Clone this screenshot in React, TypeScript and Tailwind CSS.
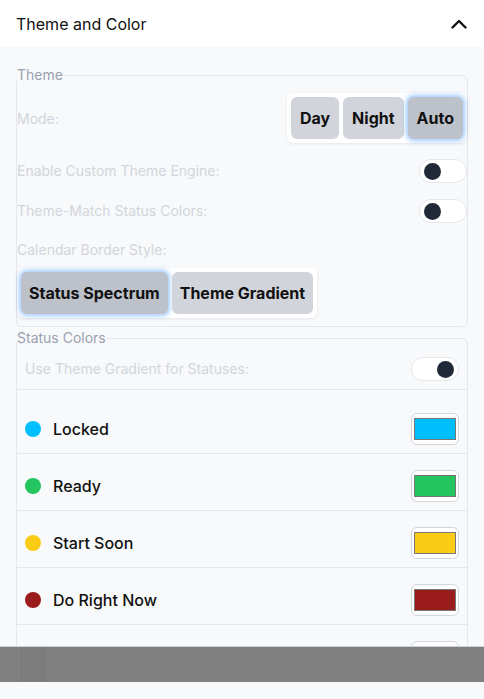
import type { ReactNode } from 'react'

type Status = { name: string; color: string }

const STATUSES: Status[] = [
  { name: 'Locked', color: '#00bfff' },
  { name: 'Ready', color: '#22c55e' },
  { name: 'Start Soon', color: '#facc15' },
  { name: 'Do Right Now', color: '#991b1b' },
  { name: 'Overdue', color: '#ffffff' },
]

const ACTIVE = 'bg-[#bcc1ca] shadow-[0_0_5px_2px_rgba(125,185,250,0.75)]'
const IDLE = 'bg-[#d1d5db]'

function Toggle({ on }: { on?: boolean }) {
  return (
    <div className={`w-12 h-6 rounded-full border border-gray-200 bg-white flex items-center px-[4px] ${on ? 'justify-end' : 'justify-start'}`}>
      <div className="w-[17px] h-[17px] rounded-full bg-[#1f2937]" />
    </div>
  )
}

function Segmented({ items, active, pad }: { items: string[]; active: string; pad: string }) {
  return (
    <div className="flex gap-1 p-1 bg-white rounded-md shadow-[0_1px_3px_rgba(0,0,0,0.08)]">
      {items.map((it) => (
        <button
          key={it}
          type="button"
          className={`h-[42px] ${pad} rounded-md text-base font-bold text-[#111] ${it === active ? ACTIVE : IDLE}`}
        >
          {it}
        </button>
      ))}
    </div>
  )
}

function Row({ label, children }: { label: string; children: ReactNode }) {
  return (
    <div className="flex items-center justify-between h-10">
      <span className="text-sm text-gray-300">{label}</span>
      {children}
    </div>
  )
}

export default function App() {
  return (
    <div className="relative w-[484px] h-[699px] overflow-hidden bg-[#f8f9fb] font-['Inter',sans-serif]">
      <div className="h-[47px] bg-white px-4 flex items-center justify-between">
        <span className="text-base text-[#111]">Theme and Color</span>
        <svg width="16" height="10" viewBox="0 0 16 10" className="mr-[1px] mt-[1px]">
          <polyline points="1.5,8.5 8,2 14.5,8.5" fill="none" stroke="#111" strokeWidth="2.4" strokeLinecap="round" strokeLinejoin="round" />
        </svg>
      </div>

      <div className="px-4 pt-[18px]">
        <fieldset className="border border-gray-200 rounded-md p-0 pb-2 min-w-0">
          <legend className="text-sm text-gray-400 leading-5">Theme</legend>
          <div className="pt-2 flex items-center justify-between">
            <span className="text-sm text-gray-300 mt-[2px]">Mode:</span>
            <Segmented items={['Day', 'Night', 'Auto']} active="Auto" pad="px-[9px]" />
          </div>
          <div className="mt-2">
            <Row label="Enable Custom Theme Engine:">
              <Toggle />
            </Row>
            <Row label="Theme-Match Status Colors:">
              <Toggle />
            </Row>
          </div>
          <div className="mt-[9px] text-sm text-gray-300 leading-5">Calendar Border Style:</div>
          <div className="mt-2 flex">
            <Segmented items={['Status Spectrum', 'Theme Gradient']} active="Status Spectrum" pad="px-2" />
          </div>
        </fieldset>

        <fieldset className="mt-[1px] border border-gray-200 rounded-md p-0 min-w-0">
          <legend className="text-sm text-gray-400 leading-5">Status Colors</legend>
          <div className="px-2 pt-[9px] pb-2 border-b border-gray-200 flex items-center justify-between">
            <span className="text-sm text-gray-300">Use Theme Gradient for Statuses:</span>
            <Toggle on />
          </div>
          <div className="pt-[7px]">
            {STATUSES.map((s) => (
              <div key={s.name} className="px-2 pt-4 pb-2 border-b border-gray-200 flex items-center justify-between">
                <div className="flex items-center gap-3">
                  <span className="w-4 h-4 rounded-full" style={{ background: s.color }} />
                  <span className="text-base font-medium text-[#111]">{s.name}</span>
                </div>
                <div className="w-12 h-8 rounded-md border border-gray-300 bg-white flex items-center justify-center">
                  <div className="w-[42px] h-[22px] border border-[#767676]" style={{ background: s.color }} />
                </div>
              </div>
            ))}
          </div>
        </fieldset>
      </div>

      <div className="absolute left-0 right-0 bottom-0 h-[53px] bg-[#f8f9fb]">
        <div className="h-9 bg-[#808080] border-t border-[#cdd0d4] pl-[21px]">
          <div className="w-[24px] h-full bg-[#7c7d7c] border-x border-[#767776]" />
        </div>
      </div>
    </div>
  )
}
